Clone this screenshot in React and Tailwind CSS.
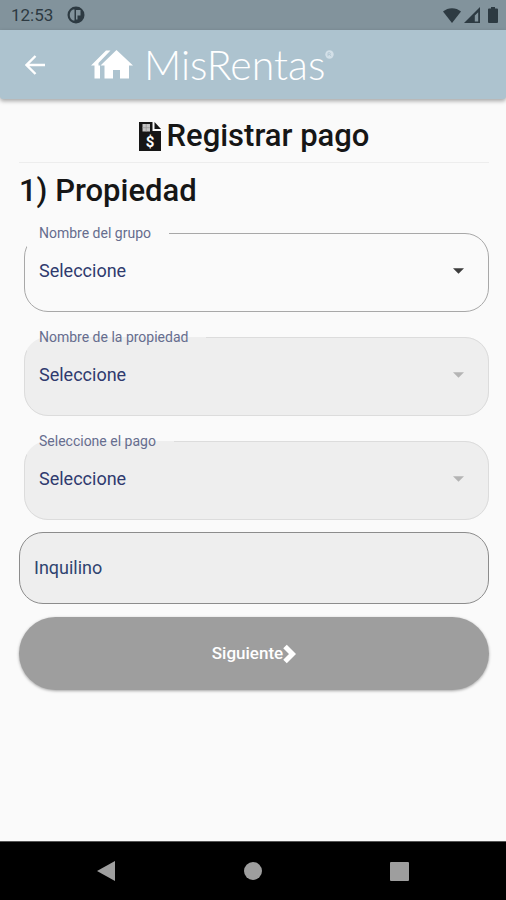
import { useState } from "react";

function SelectField({ id, label, value, onChange, options, disabled }) {
  return (
    <fieldset
      disabled={disabled}
      className={`ml-[5px] min-w-0 rounded-3xl border pb-4 ${
        disabled ? "border-[#dcdcdc] bg-[#eeeeee]" : "border-[#a8a8a8]"
      }`}
    >
      {/* the legend cuts the top left part of the outline */}
      <legend className="ml-[2px] h-7 pl-3 pr-[18px] text-sm leading-7 text-[#666d8e]">
        <label htmlFor={id}>{label}</label>
      </legend>
      <div className="relative">
        <select
          id={id}
          value={value}
          onChange={(e) => onChange(e.target.value)}
          className="block h-12 w-full appearance-none bg-transparent pl-[14px] pr-12 text-lg text-[#2f3a6e] opacity-100 outline-none"
        >
          {options.map((option) => (
            <option key={option}>{option}</option>
          ))}
        </select>
        <svg
          viewBox="0 0 12 6"
          className={`pointer-events-none absolute right-6 top-[21px] h-1.5 w-[11px] ${disabled ? "text-[#b4b4b4]" : "text-[#3c3c3c]"}`}
        >
          <path d="M0 0h12L6 6z" fill="currentColor" />
        </svg>
      </div>
    </fieldset>
  );
}

function StatusBar() {
  return (
    <div className="flex h-[30px] items-center bg-[#82939c] pl-[11px] pr-2 text-[#2d3a42]">
      <span className="text-[17px] leading-5">12:53</span>
      <svg viewBox="0 0 18 18" className="ml-3.5 h-[18px] w-[18px]">
        <circle cx="9" cy="9" r="8.5" fill="currentColor" />
        <path d="M7.500 3.500h-1.500A6.300 6.300 0 0 0 6 14.500h1.500z" fill="#82939c" />
        <path d="M9 4h4.500v5.500H10.500v4H9z" fill="#82939c" />
      </svg>
      <svg viewBox="0 0 18 15" className="ml-auto h-[15px] w-[18px]">
        <path d="M0 3.5C5-1 13-1 18 3.5L9 15z" fill="currentColor" />
      </svg>
      <svg viewBox="0 0 16 16" className="ml-[3px] h-4 w-4">
        <path d="M16 0v16H0zM14.2 5.2l-3.4 3.4v6h3.4z" fill="currentColor" fillRule="evenodd" />
      </svg>
      <svg viewBox="0 0 10 16" className="ml-2 h-4 w-2.5">
        <path d="M3 0h4v1.500h2q1 0 1 1V15q0 1-1 1H1q-1 0-1-1V2.500q0-1 1-1h2z" fill="currentColor" />
      </svg>
    </div>
  );
}

function AppBar() {
  return (
    <header className="flex h-[69px] items-center rounded-b-[3px] bg-[#adc3cf] pl-[25px] text-white shadow-[0_2px_4px_rgba(0,0,0,0.35)]">
      <button type="button" aria-label="Volver" className="h-5 w-5">
        <svg viewBox="0 0 20 20" className="h-5 w-5" fill="none" stroke="currentColor" strokeWidth="2.4">
          <path d="M20 10H2M10.5 1L1.5 10l9 9" />
        </svg>
      </button>
      <svg viewBox="0 0 42 30" className="ml-[46px] h-[30px] w-[42px]" fill="currentColor">
        <path d="M25.500 0L42 15.500h-4V28.500h-9V20h-7v8.500h-8.500V15.500H9.500z" />
        <path d="M15 .5h4.500L7.500 13v2.500h1.500V28.500H3.500V15.500H0z" />
      </svg>
      <span className="ml-[11px] font-['Lato',sans-serif] text-[41px] font-light leading-[48px]">MisRentas</span>
      <svg viewBox="0 0 9 9" className="mb-5 h-[9px] w-[9px]">
        <circle cx="4.500" cy="4.500" r="4.200" fill="#d3e0e8" />
        <path d="M3 6.200V2.800h2q1 .9 0 1.800H3m2 0l1 1.600" fill="none" stroke="#adc3cf" strokeWidth=".8" />
      </svg>
    </header>
  );
}

function NavBar() {
  return (
    <nav className="flex h-[59px] items-center justify-between border-t border-[#555] bg-black px-[97px] text-[#9e9e9e]">
      <button type="button" aria-label="Atrás">
        <svg viewBox="0 0 18 20" className="h-5 w-[18px]">
          <path d="M18 0v20L0 10z" fill="currentColor" />
        </svg>
      </button>
      <button type="button" aria-label="Inicio" className="h-[18px] w-[18px] rounded-full bg-[#9e9e9e]" />
      <button type="button" aria-label="Recientes" className="h-[19px] w-[19px] rounded-[1px] bg-[#9e9e9e]" />
    </nav>
  );
}

export default function App() {
  const [grupo, setGrupo] = useState("Seleccione");
  const [propiedad, setPropiedad] = useState("Seleccione");
  const [pago, setPago] = useState("Seleccione");
  const [inquilino, setInquilino] = useState("");

  return (
    <div className="flex min-h-screen flex-col bg-[#fafafa] font-['Roboto',sans-serif]">
      <StatusBar />
      <AppBar />

      <main className="flex-1 pl-[19px] pr-[17px] pt-[17px]">
        {/* Title */}
        <h1 className="flex items-center justify-center gap-1.5 border-b border-[#ededed] pb-1.5 text-[31px] font-medium leading-10 text-[#161616]">
          <svg viewBox="0 0 22 29" className="h-[29px] w-[22px]">
            <path d="M0 0h13.500v9H22v20H0z" fill="currentColor" />
            <path d="M15.500 0L22 7h-6.500z" fill="currentColor" />
            <path d="M3.500 2h7.500v7.500H3.500z" fill="#c4c4c4" />
            <path d="M7.200 2v7.500M3.500 5.700h7.500" stroke="#999" strokeWidth=".8" />
            <text x="11" y="24.500" textAnchor="middle" fontSize="15" fontWeight="700" fill="#fff">$</text>
          </svg>
          Registrar pago
        </h1>

        <form onSubmit={(e) => e.preventDefault()}>
          <h2 className="pt-2 text-[31px] font-medium leading-10 text-[#161616]">1) Propiedad</h2>

          <div className="mt-2 flex flex-col gap-[11px]">
            <SelectField id="grupo" label="Nombre del grupo" value={grupo} onChange={setGrupo} options={["Seleccione"]} />
            <SelectField id="propiedad" label="Nombre de la propiedad" value={propiedad} onChange={setPropiedad} options={["Seleccione"]} disabled />
            <SelectField id="pago" label="Seleccione el pago" value={pago} onChange={setPago} options={["Seleccione"]} disabled />
          </div>

          <input
            type="text"
            aria-label="Inquilino"
            placeholder="Inquilino"
            value={inquilino}
            onChange={(e) => setInquilino(e.target.value)}
            disabled
            className="mt-3 block h-[72px] w-full rounded-3xl border border-[#8c8c8c] bg-[#eeeeee] px-3.5 pb-0.5 text-lg text-[#2f3a6e] outline-none placeholder:text-[#2f4470]"
          />

          <button
            type="submit"
            disabled
            className="mt-[13px] flex h-[73px] w-full items-center justify-center rounded-full bg-[#9e9e9e] text-[17px] font-medium text-white shadow-[0_1px_3px_rgba(0,0,0,0.35)]"
          >
            Siguiente
            <svg viewBox="0 0 13 20" className="h-5 w-[13px]" fill="none" stroke="currentColor" strokeWidth="5">
              <path d="M2 2.500L9.500 10 2 17.500" />
            </svg>
          </button>
        </form>
      </main>

      <NavBar />
    </div>
  );
}
